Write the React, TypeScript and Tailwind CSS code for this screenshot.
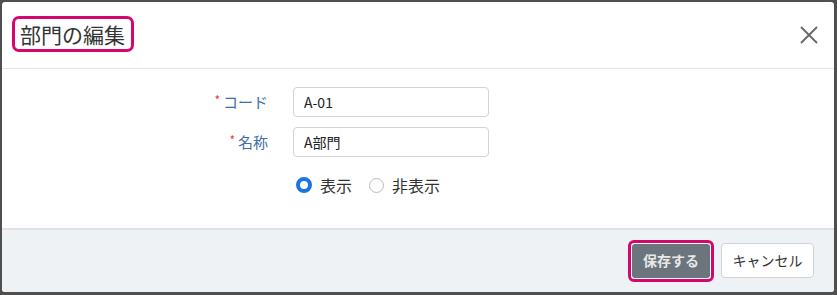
const font = { fontFamily: '"Noto Sans CJK JP", "Liberation Sans", sans-serif' };

const FieldLabel = ({ text }: { text: string }) => (
  <div className="w-[267px] flex justify-end items-center pr-[1px]">
    <span className="text-[#e53935] text-[12px] mr-[3px] -mt-[4px]">*</span>
    <span className="text-[15px] text-[#3d6fa8]">{text}</span>
  </div>
);

export default function App() {
  return (
    <div className="w-[837px] h-[295px] bg-[#4f4f4f] pt-[2px] pl-[2px] pr-[3px] pb-[3px]" style={font}>
      <div className="bg-white h-full flex flex-col rounded-[3px] overflow-hidden">
        {/* Header */}
        <div className="h-[67px] shrink-0 flex items-center justify-between pl-[10px] pr-[14px] border-b border-[#e3e6ea]">
          <div className="h-[36px] flex items-center border-[3px] border-[#d4086c] rounded-[7px] pl-[5px] pr-[6px] -mt-[2px]">
            <span className="text-[21px] text-[#333] leading-none">部門の編集</span>
          </div>
          <button className="w-[22px] h-[22px] flex items-center justify-center text-[#666]">
            <svg width="20" height="20" viewBox="0 0 20 20" fill="none" stroke="currentColor" strokeWidth="1.8">
              <path d="M2 2 L18 18 M18 2 L2 18" />
            </svg>
          </button>
        </div>

        {/* Body */}
        <div className="flex-1 flex flex-col pt-[18px]">
          <div className="flex items-center gap-[24px]">
            <FieldLabel text="コード" />
            <div className="w-[196px] h-[30px] border border-[#ced4da] rounded-[4px] flex items-center px-[10px] text-[14px] text-[#222]">
              A-01
            </div>
          </div>
          <div className="flex items-center gap-[24px] mt-[10px]">
            <FieldLabel text="名称" />
            <div className="w-[196px] h-[30px] border border-[#ced4da] rounded-[4px] flex items-center px-[10px] text-[14px] text-[#222]">
              A部門
            </div>
          </div>
          <div className="flex items-center mt-[16px] pl-[294px] text-[16px] text-[#333]">
            <span className="w-[16px] h-[16px] rounded-full border-[4px] border-[#1a73e8] bg-white" />
            <span className="ml-[8px]">表示</span>
            <span className="ml-[17px] w-[15px] h-[15px] rounded-full border border-[#bbb] bg-white" />
            <span className="ml-[8px]">非表示</span>
          </div>
        </div>

        {/* Footer */}
        <div className="h-[64px] shrink-0 bg-[#eff2f5] border-t-2 border-[#dfe2e6] flex items-center justify-end pr-[20px] gap-[7px]">
          <div className="w-[86px] h-[42px] border-[3px] border-[#d4086c] rounded-[6px] p-[1px] bg-white -mt-[1px]">
            <button className="w-full h-full bg-[#6c757d] rounded-[3px] text-[14px] font-bold text-[#e8e8e8]">保存する</button>
          </div>
          <button className="w-[93px] h-[35px] bg-white border border-[#cfd4d9] rounded-[4px] text-[14px] text-[#333] -mt-[1px]">
            キャンセル
          </button>
        </div>
      </div>
    </div>
  );
}
